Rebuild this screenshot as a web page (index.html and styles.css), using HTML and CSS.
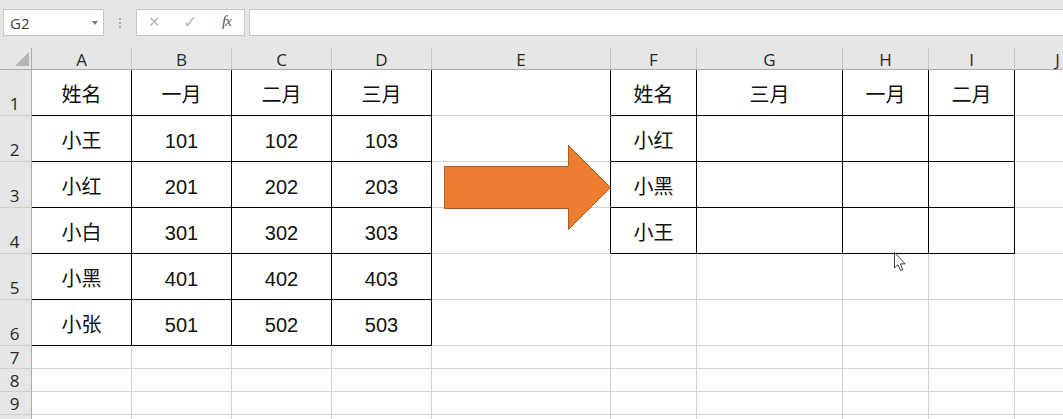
FILE: index.html
```html
<!DOCTYPE html>
<html lang="zh">
<head>
<meta charset="utf-8">
<title>Sheet</title>
<link rel="stylesheet" href="styles.css">
</head>
<body>
<div class="app">
  <div class="fbar">
    <div class="namebox"><span class="nb-text">G2</span><span class="nb-drop"></span></div>
    <div class="grip"><span></span><span></span><span></span></div>
    <div class="fxbox">
      <span class="fx-x">✕</span>
      <span class="fx-ok">✓</span>
      <span class="fx-f">fx</span>
    </div>
    <div class="finput"></div>
  </div>
  <div class="sheet">
    <div class="corner"><svg width="14" height="14" viewBox="0 0 14 14"><polygon points="14,0 14,14 0,14" fill="#b5b5b5"/></svg></div>
    <div class="ch">A</div><div class="ch">B</div><div class="ch">C</div><div class="ch">D</div><div class="ch">E</div><div class="ch">F</div><div class="ch">G</div><div class="ch">H</div><div class="ch">I</div><div class="ch">J</div>

    <div class="rh">1</div>
    <div class="c bk">姓名</div><div class="c bk">一月</div><div class="c bk">二月</div><div class="c bk">三月</div><div class="c bkr"></div>
    <div class="c bk">姓名</div><div class="c bk">三月</div><div class="c bk">一月</div><div class="c bk">二月</div><div class="c"></div>

    <div class="rh">2</div>
    <div class="c bk">小王</div><div class="c bk">101</div><div class="c bk">102</div><div class="c bk">103</div><div class="c bkr"></div>
    <div class="c bk">小红</div><div class="c bk"></div><div class="c bk"></div><div class="c bk"></div><div class="c"></div>

    <div class="rh">3</div>
    <div class="c bk">小红</div><div class="c bk">201</div><div class="c bk">202</div><div class="c bk">203</div><div class="c bkr"></div>
    <div class="c bk">小黑</div><div class="c bk"></div><div class="c bk"></div><div class="c bk"></div><div class="c"></div>

    <div class="rh">4</div>
    <div class="c bk">小白</div><div class="c bk">301</div><div class="c bk">302</div><div class="c bk">303</div><div class="c bkr"></div>
    <div class="c bk">小王</div><div class="c bk"></div><div class="c bk"></div><div class="c bk"></div><div class="c"></div>

    <div class="rh">5</div>
    <div class="c bk">小黑</div><div class="c bk">401</div><div class="c bk">402</div><div class="c bk">403</div><div class="c"></div>
    <div class="c"></div><div class="c"></div><div class="c"></div><div class="c"></div><div class="c"></div>

    <div class="rh">6</div>
    <div class="c bk">小张</div><div class="c bk">501</div><div class="c bk">502</div><div class="c bk">503</div><div class="c"></div>
    <div class="c"></div><div class="c"></div><div class="c"></div><div class="c"></div><div class="c"></div>

    <div class="rh sm">7</div>
    <div class="c"></div><div class="c"></div><div class="c"></div><div class="c"></div><div class="c"></div><div class="c"></div><div class="c"></div><div class="c"></div><div class="c"></div><div class="c"></div>

    <div class="rh sm">8</div>
    <div class="c"></div><div class="c"></div><div class="c"></div><div class="c"></div><div class="c"></div><div class="c"></div><div class="c"></div><div class="c"></div><div class="c"></div><div class="c"></div>

    <div class="rh sm">9</div>
    <div class="c"></div><div class="c"></div><div class="c"></div><div class="c"></div><div class="c"></div><div class="c"></div><div class="c"></div><div class="c"></div><div class="c"></div><div class="c"></div>

    <div class="rh sm"></div>
    <div class="c"></div><div class="c"></div><div class="c"></div><div class="c"></div><div class="c"></div><div class="c"></div><div class="c"></div><div class="c"></div><div class="c"></div><div class="c"></div>
  </div>

  <svg class="arrow" width="170" height="90" viewBox="443 144 170 90">
    <polygon points="444.5,166.5 568.5,166.5 568.5,145.5 610.5,187.5 568.5,229.5 568.5,208.5 444.5,208.5" fill="#ed7d31" stroke="#ae5a21" stroke-width="1"/>
  </svg>

  <svg class="cursor" width="14" height="20" viewBox="0 0 14 20">
    <path d="M0.5,0.5 V16 L4,12.7 L6.6,18.6 L8.8,17.6 L6.3,11.9 H11.2 Z" fill="#ffffff" stroke="#3a3a3a" stroke-width="1" stroke-linejoin="round"/>
  </svg>
</div>
</body>
</html>
```

FILE: styles.css
```css
html, body {
  margin: 0;
  padding: 0;
}
body {
  width: 1063px;
  height: 419px;
  overflow: hidden;
  background: #e6e6e6;
  font-family: "Liberation Sans", "Noto Sans CJK SC", sans-serif;
}
.app {
  position: relative;
  width: 1063px;
  height: 419px;
  overflow: hidden;
}

/* formula bar */
.fbar {
  height: 48px;
  box-sizing: border-box;
  padding-top: 9px;
  display: flex;
  align-items: flex-start;
}
.namebox {
  margin-left: 3px;
  width: 101px;
  height: 27px;
  box-sizing: border-box;
  background: #ffffff;
  border: 1px solid #c6c6c6;
  display: flex;
  align-items: center;
  justify-content: space-between;
  padding: 0 5px 0 6px;
}
.nb-text {
  font-family: "Open Sans", "Noto Sans", sans-serif;
  font-size: 15px;
  color: #444;
}
.nb-drop {
  width: 0;
  height: 0;
  border-left: 3.5px solid transparent;
  border-right: 3.5px solid transparent;
  border-top: 4px solid #7a7a7a;
}
.grip {
  width: 32px;
  height: 27px;
  display: flex;
  flex-direction: column;
  align-items: center;
  justify-content: center;
  gap: 2px;
}
.grip span {
  width: 2px;
  height: 2px;
  background: #a8a8a8;
}
.fxbox {
  width: 109px;
  height: 27px;
  box-sizing: border-box;
  background: #ffffff;
  border: 1px solid #c6c6c6;
  display: flex;
  align-items: center;
  position: relative;
}
.fx-x {
  position: absolute;
  left: 11px;
  top: 3px;
  font-size: 15px;
  color: #b8b8b8;
  font-family: "DejaVu Sans", sans-serif;
}
.fx-ok {
  position: absolute;
  left: 46px;
  top: 2px;
  font-size: 17px;
  color: #b8b8b8;
  font-family: "DejaVu Sans", sans-serif;
}
.fx-f {
  position: absolute;
  left: 85px;
  top: 3px;
  font-family: "Liberation Serif", serif;
  font-style: italic;
  font-size: 15px;
  color: #555;
  letter-spacing: -1px;
}
.finput {
  margin-left: 4px;
  flex: 1;
  height: 27px;
  box-sizing: border-box;
  background: #ffffff;
  border: 1px solid #c6c6c6;
  border-right: none;
}

/* sheet grid */
.sheet {
  display: grid;
  grid-template-columns: 32px 100px 100px 100px 100px 179px 86px 146px 86px 86px 86px;
  grid-template-rows: 22px repeat(6, 46px) repeat(4, 23px);
  background: #ffffff;
}
.sheet > div {
  box-sizing: border-box;
}
.corner {
  background: #e6e6e6;
  border-right: 1px solid #ababab;
  border-bottom: 1px solid #ababab;
  display: flex;
  justify-content: flex-end;
  align-items: flex-end;
  padding: 0 2px 3px 0;
}
.corner svg {
  display: block;
}
.ch {
  background: #e6e6e6;
  border-right: 1px solid #c4c4c4;
  border-bottom: 1px solid #ababab;
  display: flex;
  align-items: center;
  justify-content: center;
  font-family: "Open Sans", "Noto Sans", sans-serif;
  font-size: 17px;
  color: #262626;
  padding-top: 1px;
}
.rh {
  background: #e6e6e6;
  border-right: 1px solid #ababab;
  border-bottom: 1px solid #cfcfcf;
  display: flex;
  align-items: flex-end;
  justify-content: center;
  font-family: "Open Sans", "Noto Sans", sans-serif;
  font-size: 17px;
  line-height: 18px;
  color: #262626;
  padding-bottom: 2px;
  padding-right: 2px;
}
.rh.sm {
  padding-bottom: 1px;
}
.c {
  border-right: 1px solid #d4d4d4;
  border-bottom: 1px solid #d4d4d4;
  display: flex;
  align-items: center;
  justify-content: center;
  font-size: 20px;
  line-height: 24px;
  color: #111;
  padding-top: 5px;
  white-space: nowrap;
}
.c.bk {
  border-right-color: #000;
  border-bottom-color: #000;
}
.c.bkr {
  border-right-color: #000;
}

/* overlays */
.arrow {
  position: absolute;
  left: 443px;
  top: 144px;
}
.cursor {
  position: absolute;
  left: 894px;
  top: 252px;
}
```
